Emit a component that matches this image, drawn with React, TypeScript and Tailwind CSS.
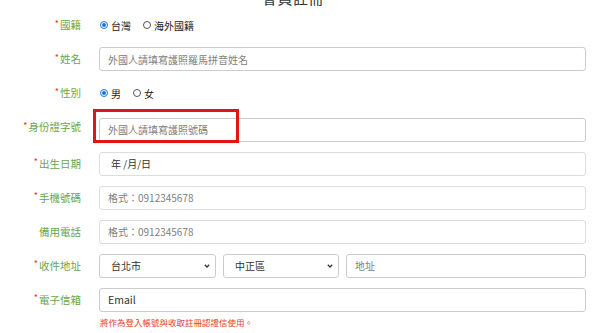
import React from "react";

function Label({ text, req = true }: { text: string; req?: boolean }) {
  return (
    <div className="flex items-center justify-end h-[24px] text-[10.5px] text-[#67a64b] whitespace-nowrap">
      {req && <span className="text-[#e53030] text-[9px] mr-[1px] -mt-[3px]">*</span>}
      <span>{text}</span>
    </div>
  );
}

function Radio({ checked, text }: { checked: boolean; text: string }) {
  return (
    <label className="flex items-center gap-[3px] text-[10px] text-[#222]">
      <span
        className={
          checked
            ? "w-[8px] h-[8px] rounded-full border border-[#1a73e8] flex items-center justify-center"
            : "w-[8px] h-[8px] rounded-full border border-[#555]"
        }
      >
        {checked && <span className="w-[4px] h-[4px] rounded-full bg-[#1a73e8]" />}
      </span>
      <span>{text}</span>
    </label>
  );
}

function Field({ ph, border = "border-[#cccccc]", value }: { ph: string; border?: string; value?: string }) {
  return (
    <input
      readOnly
      value={value}
      placeholder={ph}
      className={`w-full h-[24px] rounded-[3px] border ${border} bg-white px-[8px] text-[10px] text-[#333] placeholder:text-[#808080] outline-none`}
    />
  );
}

function Select({ text, w }: { text: string; w: string }) {
  return (
    <div className={`relative ${w} h-[24px] shrink-0`}>
      <div className="w-full h-full rounded-[3px] border border-[#cccccc] bg-white pl-[11px] flex items-center text-[10px] text-[#333]">
        {text}
      </div>
      <svg className="absolute right-[6px] top-[10px]" width="6" height="4" viewBox="0 0 6 4">
        <path d="M0.8 0.8 L3 3 L5.2 0.8" stroke="#333" strokeWidth="1.3" fill="none" />
      </svg>
    </div>
  );
}

export default function App() {
  return (
    <div className="w-[600px] h-[333px] overflow-hidden bg-white font-['Noto_Sans_CJK_TC','Microsoft_JhengHei',sans-serif]">
      <div className="h-[13px] overflow-hidden flex justify-center pr-[14px]">
        <div className="text-[15px] leading-[16px] -mt-[10px] tracking-[0.5px] text-[#333]">會員註冊</div>
      </div>
      <div className="grid grid-cols-[81px_487px] gap-x-[18px] gap-y-[10px]">
        <Label text="國籍" />
        <div className="flex items-center gap-[12px] h-[24px] pl-[1px]">
          <Radio checked text="台灣" />
          <Radio checked={false} text="海外國籍" />
        </div>

        <Label text="姓名" />
        <Field ph="外國人請填寫護照羅馬拼音姓名" />

        <Label text="性別" />
        <div className="flex items-center gap-[12px] h-[24px] pl-[1px]">
          <Radio checked text="男" />
          <Radio checked={false} text="女" />
        </div>

        <Label text="身份證字號" />
        <div className="relative">
          <Field ph="外國人請填寫護照號碼" />
          <div className="absolute left-[-6px] top-[-6px] w-[146px] h-[34px] border-[3px] border-[#e01515] pointer-events-none" />
        </div>

        <Label text="出生日期" />
        <div className="w-full h-[24px] rounded-[3px] border border-[#dddddd] bg-white pl-[11px] flex items-center text-[10px] text-[#333]">
          年 /月/日
        </div>

        <Label text="手機號碼" />
        <Field ph="格式：0912345678" border="border-[#dddddd]" />

        <Label text="備用電話" req={false} />
        <Field ph="格式：0912345678" border="border-[#dddddd]" />

        <Label text="收件地址" />
        <div className="flex gap-[7px] h-[24px]">
          <Select text="台北市" w="w-[117px]" />
          <Select text="中正區" w="w-[116px]" />
          <Field ph="地址" />
        </div>

        <Label text="電子信箱" />
        <div className="flex flex-col">
          <input
            readOnly
            value="Email"
            className="w-full h-[24px] rounded-[3px] border border-[#cccccc] bg-white px-[8px] text-[10.5px] text-[#333] outline-none"
          />
          <div className="mt-[4px] pl-[1px] text-[8.5px] leading-[12px] text-[#e83a2a]">將作為登入帳號與收取註冊認證信使用。</div>
        </div>
      </div>
    </div>
  );
}
